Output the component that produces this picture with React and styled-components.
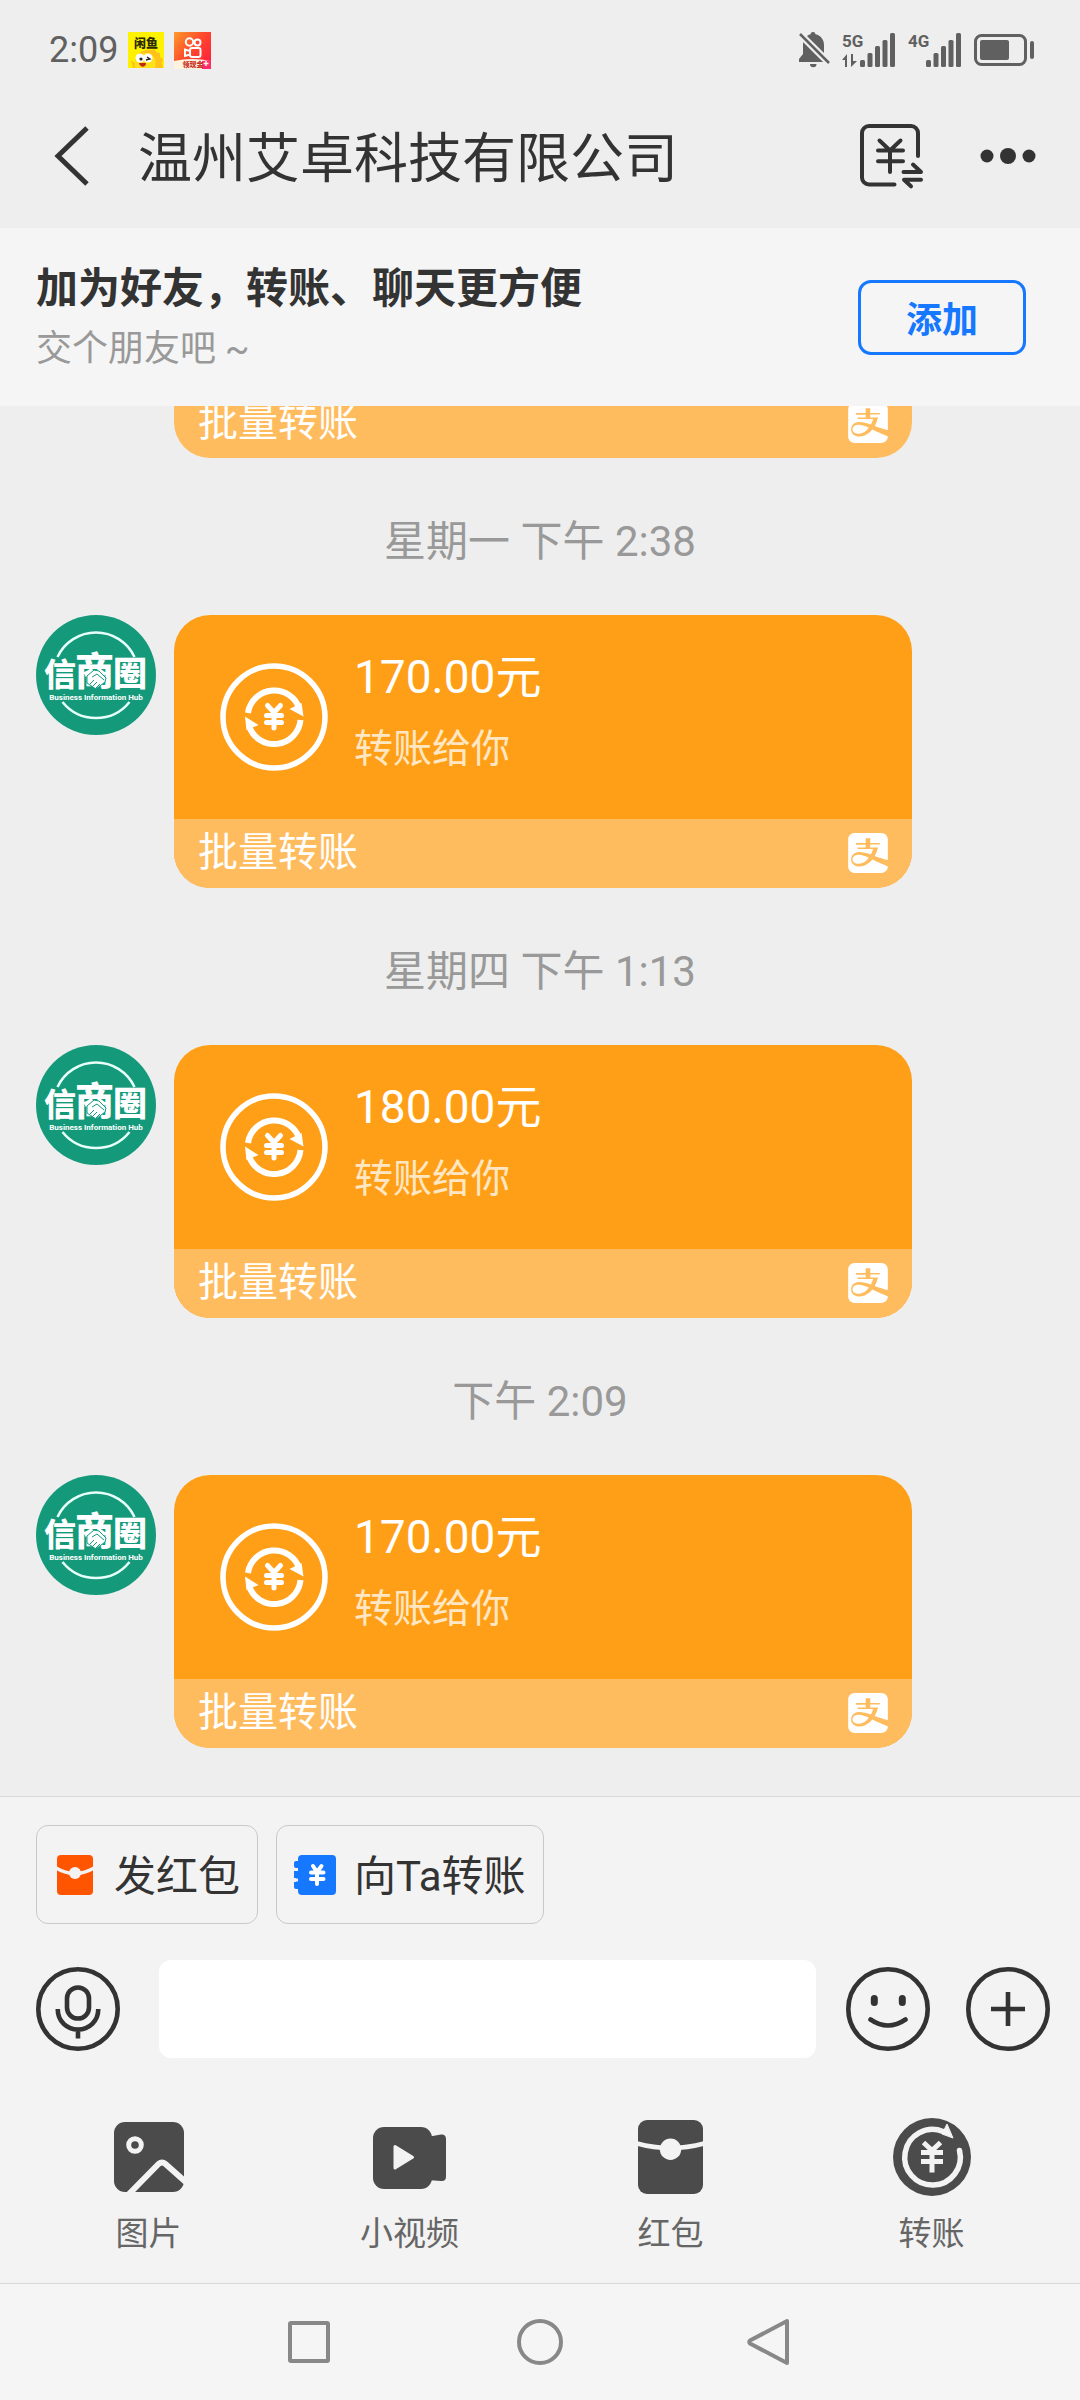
import { useState } from "react";
import styled, { createGlobalStyle } from "styled-components";
import { SiAlipay } from "react-icons/si";

const GlobalStyle = createGlobalStyle`
  * {
    box-sizing: border-box;
  }
  body {
    margin: 0;
    background: #eeeeee;
    font-family: Roboto, "Noto Sans CJK SC", sans-serif;
    color: #333333;
  }
  button, input {
    font-family: inherit;
    color: inherit;
    padding: 0;
    border: 0;
    background: transparent;
  }
  button {
    cursor: pointer;
  }
  svg {
    display: block;
    flex-shrink: 0;
  }
`;

const Page = styled.div`
  display: flex;
  flex-direction: column;
  height: 100vh;
`;

/* status bar */

const StatusBar = styled.div`
  display: flex;
  align-items: center;
  justify-content: space-between;
  height: 84px;
  padding: 16px 46px 0 49px;
  color: #606060;
`;

const StatusGroup = styled.div`
  display: flex;
  align-items: center;
  gap: ${(props) => props.$gap}px;
`;

const Clock = styled.span`
  font-size: 36px;
  line-height: 36px;
`;

const GoodsAppIcon = () => (
  <svg width="36" height="36" viewBox="0 0 36 36">
    <rect width="36" height="36" fill="#fff200" />
    <path
      d="M5 36l-2-8 4 3C7 22 15 17 24 18l3-1 1 3 4 1v4l3 2-1 4 1 5z"
      fill="#ffc21a"
    />
    <path d="M7 36c-2-9 4-15 11-15 8 0 11 7 9 15z" fill="#ffe11a" />
    <circle cx="12" cy="26" r="4.5" fill="#fff" />
    <circle cx="20" cy="26" r="4.5" fill="#fff" />
    <circle cx="13" cy="27" r="1.6" fill="#222" />
    <path d="M18 28l4-1-3-2" fill="none" stroke="#222" strokeWidth="1.3" />
    <path d="M11 31h7c0 5-6 5-7 0z" fill="#c3271c" />
    <text
      x="18"
      y="16"
      textAnchor="middle"
      fontSize="12"
      fontWeight="900"
      fill="#2b2a00"
    >
      闲鱼
    </text>
  </svg>
);

const VideoAppIcon = () => (
  <svg width="37" height="37" viewBox="0 0 37 37">
    <defs>
      <linearGradient id="videoApp" x1="0" y1="0" x2="1" y2="0.8">
        <stop offset="0" stopColor="#ff9c2a" />
        <stop offset="0.5" stopColor="#ff4b2b" />
        <stop offset="1" stopColor="#ff1f3d" />
      </linearGradient>
    </defs>
    <rect width="37" height="37" fill="url(#videoApp)" />
    <g fill="none" stroke="#fff" strokeWidth="2">
      <circle cx="15.5" cy="10" r="3.7" />
      <circle cx="23.5" cy="10.5" r="3" />
      <rect x="16" y="16" width="10.5" height="9" rx="2" />
      <path d="M16 19l-5-1.500v6.500l5-1.500" />
    </g>
    <path d="M0 29q18-4 37 0v8H0z" fill="#fff3df" />
    <path d="M28 29l9-1v9h-9z" fill="#ff2e6a" />
    <path d="M32 29v5M29.500 31.500h5" stroke="#fff3df" strokeWidth="1.500" />
    <text
      x="19"
      y="35"
      textAnchor="middle"
      fontSize="7"
      fontWeight="900"
      fill="#c8321e"
    >
      领现金
    </text>
  </svg>
);

const MutedIcon = () => (
  <svg width="31" height="36" viewBox="0 0 31 36">
    <path
      d="M14 0a2.500 2.500 0 0 1 2.500 2.300C22 3.500 25 8 25 13v9l3 5v3H0v-3l4-5v-9c0-5 3-9.500 7.500-10.700A2.500 2.500 0 0 1 14 0zM11 32h6.500a3.200 3.200 0 0 1-6.500 0z"
      fill="currentColor"
    />
    <path d="M-1 0l34 34" stroke="#eeeeee" strokeWidth="7" />
    <path d="M1 2l29 29" stroke="currentColor" strokeWidth="2.500" />
  </svg>
);

const SignalText = styled.text`
  font-size: 17px;
  font-weight: 700;
`;

const SignalIcon = ({ label, active }) => (
  <svg width="54" height="42" viewBox="0 -4 54 42" fill="currentColor">
    <SignalText x="0" y="14">
      {label}
    </SignalText>
    {active && <path d="M0 27l5-6v13H3v-7zM9 21h2v7h4l-6 6z" />}
    <rect x="18" y="27" width="5" height="7" rx="1.500" />
    <rect x="25.500" y="20" width="5" height="14" rx="1.500" />
    <rect x="33" y="13" width="5" height="21" rx="1.500" />
    <rect x="40.500" y="7" width="5" height="27" rx="1.500" />
    <rect x="48" y="0" width="5" height="34" rx="1.500" />
  </svg>
);

const BatteryIcon = () => (
  <svg width="60" height="34" viewBox="0 0 60 34">
    <rect
      x="1.500"
      y="2.500"
      width="50"
      height="29"
      rx="6"
      fill="none"
      stroke="currentColor"
      strokeWidth="3"
    />
    <rect x="6" y="7" width="29" height="20" rx="2" fill="currentColor" />
    <rect x="56" y="8" width="4" height="18" rx="2" fill="currentColor" />
  </svg>
);

/* header */

const Header = styled.header`
  display: flex;
  align-items: center;
  height: 144px;
  padding: 0 44px 0 54px;
`;

const Title = styled.h1`
  flex: 1;
  margin: 0 0 0 48px;
  padding-top: 8px;
  font-size: 54px;
  line-height: 72px;
  font-weight: 400;
`;

const HeaderActions = styled.div`
  display: flex;
  align-items: center;
  gap: 54px;
`;

const BackIcon = () => (
  <svg width="36" height="60" viewBox="0 0 36 60">
    <path
      d="M33 2L4 30l29 28"
      fill="none"
      stroke="currentColor"
      strokeWidth="5"
    />
  </svg>
);

const BillIcon = () => (
  <svg
    width="68"
    height="68"
    viewBox="0 0 68 68"
    fill="none"
    stroke="currentColor"
    strokeWidth="4"
    strokeLinecap="round"
    strokeLinejoin="round"
  >
    <path d="M60 34V11a7 7 0 0 0-7-7H11a7 7 0 0 0-7 7v44.500a7 7 0 0 0 7 7h25.500" />
    <path d="M21.500 18.500L32 28.500l10.500-10M32 28.500V50M20 28.500h25M20 39.300h25" />
    <path d="M45.500 50H63l-8-7.500M63 57.800H46l7 6.500" />
  </svg>
);

const MoreIcon = () => (
  <svg width="56" height="20" viewBox="0 0 56 20" fill="currentColor">
    <circle cx="7" cy="10" r="6.500" />
    <circle cx="28" cy="10" r="8" />
    <circle cx="49" cy="10" r="6.500" />
  </svg>
);

/* add friend banner */

const Banner = styled.section`
  display: flex;
  align-items: center;
  justify-content: space-between;
  height: 178px;
  padding: 0 54px 0 36px;
  background: #f5f5f5;
`;

const BannerText = styled.div`
  padding-top: 4px;
`;

const BannerTitle = styled.h2`
  margin: 0;
  font-size: 42px;
  line-height: 60px;
  font-weight: 700;
`;

const BannerHint = styled.p`
  margin: 0;
  font-size: 36px;
  line-height: 60px;
  color: #999999;
`;

const AddButton = styled.button`
  width: 168px;
  height: 75px;
  border: 3px solid #1677ff;
  border-radius: 13px;
  font-size: 36px;
  font-weight: 700;
  color: #1677ff;
`;

/* messages */

const Chat = styled.main`
  flex: 1;
  min-height: 0;
  display: flex;
  flex-direction: column-reverse;
  overflow-y: auto;
  scrollbar-width: none;
`;

const MessageList = styled.div`
  padding-bottom: 48px;
`;

const Time = styled.div`
  padding: 54px 0 43px;
  font-size: 42px;
  line-height: 60px;
  text-align: center;
  color: #999999;
`;

const MessageRow = styled.div`
  display: grid;
  grid-template-columns: 120px 1fr;
  gap: 18px;
  padding: 0 168px 0 36px;
`;

const Card = styled.article`
  grid-column: 2;
  border-radius: ${(props) => (props.$footerOnly ? "0 0 36px 36px" : "36px")};
  background: #ff9f18;
  color: #ffffff;
  overflow: hidden;
`;

const CardMain = styled.div`
  display: flex;
  align-items: center;
  gap: 26px;
  height: 204px;
  padding-left: 46px;
`;

const CardText = styled.div`
  padding-bottom: 8px;
`;

const Amount = styled.div`
  font-size: 46px;
  line-height: 72px;
`;

const Note = styled.div`
  font-size: 39px;
  line-height: 72px;
  color: #ffe7c4;
`;

const CardFooter = styled.div`
  display: flex;
  align-items: center;
  justify-content: space-between;
  height: 69px;
  padding: 0 24px 2px;
  background: #ffbc5e;
  font-size: 40px;
  line-height: 60px;
`;

const LogoText = styled.text`
  font-family: "Noto Sans CJK SC", sans-serif;
  font-weight: 900;
`;

const Avatar = () => (
  <svg width="120" height="120" viewBox="0 0 120 120">
    <circle cx="60" cy="60" r="60" fill="#149a7b" />
    <path
      d="M21.500 42a42.500 42.500 0 0 1 77 0M26.500 87a43 43 0 0 0 67 0"
      fill="none"
      stroke="#e6fff9"
      strokeWidth="2.500"
    />
    <g fill="#fff">
      <LogoText x="8" y="71" fontSize="32">
        信
      </LogoText>
      <LogoText x="39" y="70" fontSize="39">
        商
      </LogoText>
      <LogoText x="77" y="71" fontSize="34">
        圈
      </LogoText>
      <path
        d="M51 61l7-6 5 1 7 7-1 4-9 7-9-6z"
        stroke="#149a7b"
        strokeWidth="1"
      />
      <path
        d="M56 62l5-3 7 6M54 69l4-4M57 71l4-4M60 73l4-4"
        fill="none"
        stroke="#149a7b"
        strokeWidth="1"
      />
      <text x="60" y="85" fontSize="8" fontWeight="700" textAnchor="middle">
        Business Information Hub
      </text>
    </g>
  </svg>
);

const TransferIcon = () => (
  <svg width="108" height="108" viewBox="0 0 108 108" fill="none" stroke="#fff">
    <circle cx="54" cy="54" r="51" strokeWidth="5.500" />
    <path d="M28 50a26.500 26.500 0 0 1 51.500-4" strokeWidth="6" />
    <path d="M83.500 53.500l-14-7.500 12-6z" fill="#fff" stroke="none" />
    <path d="M80.500 57a26.500 26.500 0 0 1-51.500 6" strokeWidth="6" />
    <path d="M25 53.500L38.500 62l-12 5z" fill="#fff" stroke="none" />
    <path
      d="M47.500 42.500l6.500 7 6.500-7M54 49.500V65M46.500 52.500h15M46.500 59.500h15"
      strokeWidth="5"
      strokeLinecap="round"
      strokeLinejoin="round"
    />
  </svg>
);

const TransferMessage = ({ amount }) => (
  <MessageRow>
    {amount && <Avatar />}
    <Card $footerOnly={!amount}>
      {amount && (
        <CardMain>
          <TransferIcon />
          <CardText>
            <Amount>{amount}元</Amount>
            <Note>转账给你</Note>
          </CardText>
        </CardMain>
      )}
      <CardFooter>
        批量转账
        <SiAlipay size={40} />
      </CardFooter>
    </Card>
  </MessageRow>
);

/* composer */

const Composer = styled.footer`
  border-top: 1px solid #d9d9d9;
  background: #f3f3f3;
`;

const ChipRow = styled.div`
  display: flex;
  gap: 18px;
  padding: 28px 36px 36px;
`;

const Chip = styled.button`
  display: flex;
  align-items: center;
  gap: 18px;
  height: 99px;
  padding: 0 17px;
  border: 1px solid #c9c9c9;
  border-radius: 12px;
  font-size: 42px;
  line-height: 60px;
`;

const ChipLabel = styled.span`
  padding-top: 4px;
`;

const InputRow = styled.div`
  display: flex;
  align-items: center;
  gap: 36px;
  padding: 0 30px 0 36px;
`;

const MessageInput = styled.input`
  flex: 1;
  min-width: 0;
  height: 98px;
  margin: 0 -6px 0 3px;
  padding: 0 24px;
  border-radius: 12px;
  background: #ffffff;
  font-size: 42px;
`;

const ToolGrid = styled.div`
  display: grid;
  grid-template-columns: repeat(4, 1fr);
  padding: 60px 18px 25px;
`;

const Tool = styled.button`
  display: flex;
  flex-direction: column;
  align-items: center;
  gap: 14px;
  font-size: 33px;
  line-height: 48px;
  color: #666666;
`;

const EnvelopeChipIcon = () => (
  <svg width="42" height="42" viewBox="0 0 42 42">
    <rect x="3" y="1" width="36" height="40" rx="4" fill="#ff5500" />
    <path d="M2 14q19 11 38 0" fill="none" stroke="#f3f3f3" strokeWidth="3.500" />
    <circle cx="21" cy="19" r="6" fill="#f3f3f3" />
  </svg>
);

const TransferChipIcon = () => (
  <svg width="42" height="42" viewBox="0 0 42 42">
    <rect x="4" y="1" width="38" height="40" rx="4" fill="#1677ff" />
    <path
      d="M6 7H2Q0 7 0 9v3q0 2 2 2h0v3H0v7h2v4H0v5q0 2 2 2h4z"
      fill="#1677ff"
    />
    <path d="M0 14h4v3H0zM0 24.500h4v3H0z" fill="#f3f3f3" />
    <path
      d="M19 12l4 6 4.500-6M23 18v12M17 18.500h12.500M17 25h12.500"
      fill="none"
      stroke="#fff"
      strokeWidth="4"
      strokeLinecap="round"
      strokeLinejoin="round"
    />
  </svg>
);

const RoundIcon = ({ children }) => (
  <svg
    width="84"
    height="84"
    viewBox="0 0 84 84"
    fill="none"
    stroke="currentColor"
    strokeWidth="4.600"
  >
    <circle cx="42" cy="42" r="39.700" />
    {children}
  </svg>
);

const ImageToolIcon = () => (
  <svg width="78" height="78" viewBox="0 0 78 78">
    <rect x="4" y="4" width="70" height="70" rx="11" fill="#4b4b4b" />
    <g fill="none" stroke="#f3f3f3">
      <circle cx="25" cy="27" r="6.300" strokeWidth="5" />
      <path
        d="M17 78l31.500-32q3.500-3 7 0L78 66"
        strokeWidth="6"
        strokeLinejoin="round"
      />
    </g>
  </svg>
);

const VideoToolIcon = () => (
  <svg width="78" height="78" viewBox="0 0 78 78" fill="#4b4b4b">
    <rect x="2" y="9" width="59" height="62" rx="11" />
    <path d="M56 19l14-2.500q5-.5 5 4.500v37.500q0 5-5 4.500L56 62z" />
    <path
      d="M24 28.500v21.500L41.500 39.200z"
      fill="#f3f3f3"
      stroke="#f3f3f3"
      strokeWidth="3"
      strokeLinejoin="round"
    />
  </svg>
);

const EnvelopeToolIcon = () => (
  <svg width="78" height="78" viewBox="0 0 78 78">
    <rect x="6" y="2" width="65" height="74" rx="9" fill="#4b4b4b" />
    <path d="M5 25.500q33.500 9 67 0" fill="none" stroke="#f3f3f3" strokeWidth="4.500" />
    <circle cx="38.500" cy="31.300" r="10.700" fill="#f3f3f3" />
  </svg>
);

const TransferToolIcon = () => (
  <svg width="78" height="78" viewBox="0 0 78 78">
    <circle cx="39" cy="39" r="39" fill="#4b4b4b" />
    <g fill="none" stroke="#f3f3f3">
      <path
        d="M66.500 32.500A27.800 27.800 0 1 1 50 13.500"
        strokeWidth="5.500"
        strokeLinecap="round"
      />
      <path
        d="M30.500 24.500l8.500 8 8.500-8M39 32v22.500M28 34.500h22M28 43.500h22"
        strokeWidth="5"
      />
    </g>
    <path d="M54 6l6 14-11-4z" fill="#f3f3f3" stroke="#f3f3f3" strokeLinejoin="round" />
  </svg>
);

/* system navigation */

const NavBar = styled.nav`
  display: flex;
  align-items: center;
  justify-content: center;
  gap: 183px;
  height: 117px;
  border-top: 1px solid #d9d9d9;
  background: #f5f5f5;
  color: #888888;
`;

const NavIcon = ({ children }) => (
  <svg
    width="48"
    height="48"
    viewBox="0 0 48 48"
    fill="none"
    stroke="currentColor"
    strokeWidth="4"
    strokeLinejoin="round"
  >
    {children}
  </svg>
);

const messages = [
  { id: 1 },
  { id: 2, time: "星期一 下午 2:38", amount: "170.00" },
  { id: 3, time: "星期四 下午 1:13", amount: "180.00" },
  { id: 4, time: "下午 2:09", amount: "170.00" },
];

const tools = [
  { label: "图片", Icon: ImageToolIcon },
  { label: "小视频", Icon: VideoToolIcon },
  { label: "红包", Icon: EnvelopeToolIcon },
  { label: "转账", Icon: TransferToolIcon },
];

export default function App() {
  const [draft, setDraft] = useState("");

  return (
    <Page>
      <GlobalStyle />
      <StatusBar>
        <StatusGroup $gap={10}>
          <Clock>2:09</Clock>
          <GoodsAppIcon />
          <VideoAppIcon />
        </StatusGroup>
        <StatusGroup $gap={12}>
          <MutedIcon />
          <SignalIcon label="5G" active />
          <SignalIcon label="4G" />
          <BatteryIcon />
        </StatusGroup>
      </StatusBar>

      <Header>
        <button type="button" aria-label="返回">
          <BackIcon />
        </button>
        <Title>温州艾卓科技有限公司</Title>
        <HeaderActions>
          <button type="button" aria-label="账单">
            <BillIcon />
          </button>
          <button type="button" aria-label="更多">
            <MoreIcon />
          </button>
        </HeaderActions>
      </Header>

      <Banner>
        <BannerText>
          <BannerTitle>加为好友，转账、聊天更方便</BannerTitle>
          <BannerHint>交个朋友吧 ~</BannerHint>
        </BannerText>
        <AddButton type="button">添加</AddButton>
      </Banner>

      <Chat>
        <MessageList>
          {messages.map(({ id, time, amount }) => (
            <div key={id}>
              {time && <Time>{time}</Time>}
              <TransferMessage amount={amount} />
            </div>
          ))}
        </MessageList>
      </Chat>

      <Composer>
        <ChipRow>
          <Chip type="button">
            <EnvelopeChipIcon />
            <ChipLabel>发红包</ChipLabel>
          </Chip>
          <Chip type="button">
            <TransferChipIcon />
            <ChipLabel>向Ta转账</ChipLabel>
          </Chip>
        </ChipRow>
        <InputRow>
          <button type="button" aria-label="语音">
            <RoundIcon>
              <rect x="31" y="20.500" width="22" height="31" rx="11" />
              <path d="M21.800 42v1a20.200 19.500 0 0 0 40.400 0v-1M42 62v9.500" />
            </RoundIcon>
          </button>
          <MessageInput
            aria-label="消息"
            value={draft}
            onChange={(e) => setDraft(e.target.value)}
          />
          <button type="button" aria-label="表情">
            <RoundIcon>
              <path
                d="M28.300 31.500v4M56.300 31.500v4"
                strokeWidth="7"
                strokeLinecap="round"
              />
              <path d="M24.500 52.500q17.500 12 35 0" strokeLinecap="round" />
            </RoundIcon>
          </button>
          <button type="button" aria-label="添加附件">
            <RoundIcon>
              <path d="M25 42h34M42 25v34" />
            </RoundIcon>
          </button>
        </InputRow>
        <ToolGrid>
          {tools.map(({ label, Icon }) => (
            <Tool type="button" key={label}>
              <Icon />
              {label}
            </Tool>
          ))}
        </ToolGrid>
      </Composer>

      <NavBar>
        <button type="button" aria-label="最近任务">
          <NavIcon>
            <rect x="5" y="5" width="38" height="38" rx="1" />
          </NavIcon>
        </button>
        <button type="button" aria-label="主屏幕">
          <NavIcon>
            <circle cx="24" cy="24" r="21" />
          </NavIcon>
        </button>
        <button type="button" aria-label="返回上一级">
          <NavIcon>
            <path d="M40 3v42L3 25.500q-1.500-1.500 0-3z" />
          </NavIcon>
        </button>
      </NavBar>
    </Page>
  );
}
